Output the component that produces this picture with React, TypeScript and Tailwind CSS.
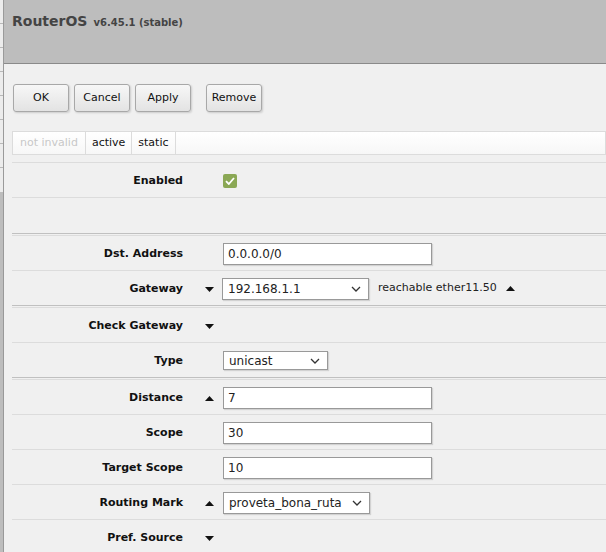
import React from "react";

function Down() {
  return (
    <svg width="9" height="5" viewBox="0 0 9 5" className="block">
      <path d="M0 0H9L4.5 5Z" fill="#111" />
    </svg>
  );
}

function Up() {
  return (
    <svg width="9" height="5" viewBox="0 0 9 5" className="block">
      <path d="M0 5H9L4.5 0Z" fill="#111" />
    </svg>
  );
}

function Chevron() {
  return (
    <svg width="10" height="6" viewBox="0 0 10 6" className="block">
      <path d="M1 1L5 5L9 1" fill="none" stroke="#333" strokeWidth="1.3" />
    </svg>
  );
}

function Row({
  label,
  arrow,
  children,
}: {
  label?: string;
  arrow?: "up" | "down";
  children?: React.ReactNode;
}) {
  return (
    <div className="flex h-[34px] shrink-0 items-center">
      <div className="w-[171px] pt-[3px] text-right text-[11px] font-bold text-[#111]">
        {label}
      </div>
      <div className="flex w-[40px] items-center pl-[22px] pt-[2px]">
        {arrow === "up" ? <Up /> : arrow === "down" ? <Down /> : null}
      </div>
      <div className="flex items-center pt-px">{children}</div>
    </div>
  );
}

const Line = () => <div className="h-px shrink-0 bg-[#dcdcdc]" />;
const DoubleLine = () => (
  <div className="h-[3px] shrink-0 border-t border-b border-t-[#c0c0c0] border-b-[#dcdcdc]" />
);

function TextInput({ value }: { value: string }) {
  return (
    <div className="flex h-[22px] w-[209px] items-center border border-[#999] bg-white px-[4px] text-[12px] text-[#222] shadow-[1px_1px_1px_rgba(0,0,0,0.12)]">
      {value}
    </div>
  );
}

function Select({ value, w, h = "h-[22px]" }: { value: string; w: string; h?: string }) {
  return (
    <div
      className={`flex ${h} ${w} items-center justify-between border border-[#999] bg-white pl-[5px] pr-[7px] text-[12px] text-[#222] shadow-[1px_1px_1px_rgba(0,0,0,0.12)]`}
    >
      <span>{value}</span>
      <Chevron />
    </div>
  );
}

function Button({ label, w }: { label: string; w: string }) {
  return (
    <button
      className={`h-[28px] ${w} rounded-[3px] border border-[#a8a8a8] bg-gradient-to-b from-[#f7f7f7] to-[#e3e3e3] text-[11px] text-[#111] shadow-[1px_1px_2px_rgba(0,0,0,0.15)]`}
    >
      {label}
    </button>
  );
}

export default function App() {
  return (
    <div className="flex h-[552px] w-[606px] overflow-hidden bg-[#f0f0f0] font-['DejaVu_Sans',sans-serif]">
      {/* sidebar edge */}
      <div className="flex w-[4px] shrink-0 flex-col">
        <div className="flex h-[192px] shrink-0 flex-col border-r border-[#9a9a9a] bg-[#ececec]">
          {[0, 1, 2, 3, 4, 5, 6].map((i) => (
            <div key={i} className="h-[24px] shrink-0 border-b border-[#b8b8b8]" />
          ))}
        </div>
        <div className="flex-1 border-r border-[#999] bg-[#bdbdbd]" />
      </div>

      <div className="flex flex-1 flex-col">
        <header className="h-[64px] shrink-0 border-b border-[#8a8a8a] bg-[#bdbdbd] pl-[8px] pt-[9px] text-[#444]">
          <span className="text-[14px] font-bold">RouterOS</span>
          <span className="ml-[6px] text-[10px] font-bold">v6.45.1 (stable)</span>
        </header>

        <div className="flex shrink-0 flex-col pl-[8px]">
          <div className="flex gap-[5px] pl-px pt-[20px]">
            <Button label="OK" w="w-[56px]" />
            <Button label="Cancel" w="w-[56px]" />
            <Button label="Apply" w="w-[56px]" />
            <Button label="Remove" w="w-[56px] ml-[10px]" />
          </div>

          <div className="mt-[19px] flex h-[24px] border border-[#dcdcdc] bg-gradient-to-b from-white to-[#f7f7f7] text-[11px] text-[#111]">
            <div className="flex items-center border-r border-[#dcdcdc] px-[7px] text-[#c8c8c8]">
              not invalid
            </div>
            <div className="flex items-center border-r border-[#dcdcdc] px-[6px]">active</div>
            <div className="flex items-center border-r border-[#dcdcdc] px-[6px]">static</div>
          </div>

          <div className="mt-[7px] flex flex-col">
            <Line />
            <Row label="Enabled">
              <div className="flex h-[14px] w-[14px] items-center justify-center rounded-[2px] bg-[#8ba855]">
                <svg width="10" height="8" viewBox="0 0 10 8">
                  <path d="M1 4.2L3.8 7L9 1" fill="none" stroke="white" strokeWidth="1.8" />
                </svg>
              </div>
            </Row>
            <Line />
            <div className="h-[35px] shrink-0" />
            <DoubleLine />
            <Row label="Dst. Address">
              <TextInput value="0.0.0.0/0" />
            </Row>
            <Line />
            <Row label="Gateway" arrow="down">
              <Select value="192.168.1.1" w="w-[147px] -ml-px" />
              <span className="ml-[9px] text-[11px] text-[#222]">reachable ether11.50</span>
              <span className="ml-[9px]">
                <Up />
              </span>
            </Row>
            <DoubleLine />
            <Row label="Check Gateway" arrow="down" />
            <Line />
            <Row label="Type">
              <Select value="unicast" w="w-[105px]" h="h-[19px]" />
            </Row>
            <DoubleLine />
            <Row label="Distance" arrow="up">
              <TextInput value="7" />
            </Row>
            <Line />
            <Row label="Scope">
              <TextInput value="30" />
            </Row>
            <Line />
            <Row label="Target Scope">
              <TextInput value="10" />
            </Row>
            <Line />
            <Row label="Routing Mark" arrow="up">
              <Select value="proveta_bona_ruta" w="w-[147px]" />
            </Row>
            <Line />
            <Row label="Pref. Source" arrow="down" />
          </div>
        </div>
      </div>
    </div>
  );
}
